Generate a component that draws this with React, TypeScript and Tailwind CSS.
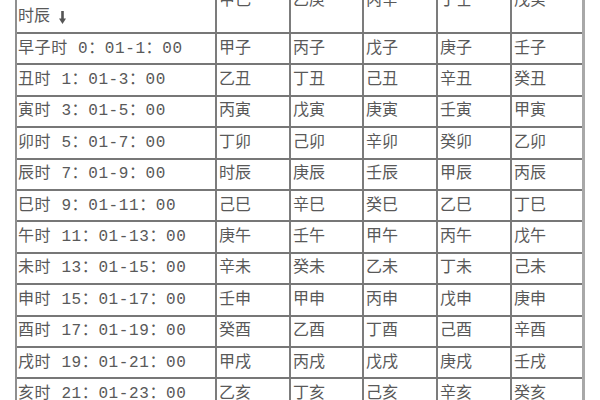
import React from "react";

const heads = ["甲己", "乙庚", "丙辛", "丁壬", "戊癸"];

const rows: [string, string[]][] = [
  ["早子时 0：01-1：00", ["甲子", "丙子", "戊子", "庚子", "壬子"]],
  ["丑时 1：01-3：00", ["乙丑", "丁丑", "己丑", "辛丑", "癸丑"]],
  ["寅时 3：01-5：00", ["丙寅", "戊寅", "庚寅", "壬寅", "甲寅"]],
  ["卯时 5：01-7：00", ["丁卯", "己卯", "辛卯", "癸卯", "乙卯"]],
  ["辰时 7：01-9：00", ["时辰", "庚辰", "壬辰", "甲辰", "丙辰"]],
  ["巳时 9：01-11：00", ["己巳", "辛巳", "癸巳", "乙巳", "丁巳"]],
  ["午时 11：01-13：00", ["庚午", "壬午", "甲午", "丙午", "戊午"]],
  ["未时 13：01-15：00", ["辛未", "癸未", "乙未", "丁未", "己未"]],
  ["申时 15：01-17：00", ["壬申", "甲申", "丙申", "戊申", "庚申"]],
  ["酉时 17：01-19：00", ["癸酉", "乙酉", "丁酉", "己酉", "辛酉"]],
  ["戌时 19：01-21：00", ["甲戌", "丙戌", "戊戌", "庚戌", "壬戌"]],
  ["亥时 21：01-23：00", ["乙亥", "丁亥", "己亥", "辛亥", "癸亥"]],
];

const colW = ["w-[74px]", "w-[73px]", "w-[74px]", "w-[74px]", "w-[71px]"];

export default function App() {
  return (
    <div
      className="w-[600px] h-[400px] overflow-hidden bg-white text-[16px] text-[#595959]"
      style={{ fontFamily: '"Liberation Mono", "Noto Sans CJK SC", monospace' }}
    >
      <div className="ml-[15px] mt-[-30px] w-[570px] border-l-2 border-r-[3px] border-l-[#8f8f8f] border-r-[#a8a8a8]">
        {/* header */}
        <div className="flex h-[64px] border-b-2 border-[#777]">
          <div className="w-[200px] shrink-0 border-r-2 border-[#7c7c7c] flex flex-col justify-end pl-[1px]">
            <div className="h-[31px] flex items-center gap-[9px]">
              <span>时辰</span>
              <svg width="7" height="13" viewBox="0 0 7 13" className="mt-[1px]">
                <rect x="2.2" y="0" width="2.6" height="9" fill="#555" />
                <path d="M0 7.5 L7 7.5 L3.5 13 Z" fill="#555" />
              </svg>
            </div>
          </div>
          {heads.map((h, i) => (
            <div
              key={h}
              className={`${colW[i]} shrink-0 flex items-center pl-[2px] ${
                i < 4 ? "border-r-2 border-[#7c7c7c]" : ""
              }`}
            >
              {h}
            </div>
          ))}
        </div>
        {rows.map(([t, cells]) => (
          <div key={t} className="flex h-[31.4px] border-b-2 border-[#777]">
            <div className="w-[200px] shrink-0 border-r-2 border-[#7c7c7c] flex items-center pl-[1px] whitespace-pre tracking-[0.6px]">
              {t}
            </div>
            {cells.map((c, i) => (
              <div
                key={i}
                className={`${colW[i]} shrink-0 flex items-center pl-[2px] ${
                  i < 4 ? "border-r-2 border-[#7c7c7c]" : ""
                }`}
              >
                {c}
              </div>
            ))}
          </div>
        ))}
      </div>
    </div>
  );
}
